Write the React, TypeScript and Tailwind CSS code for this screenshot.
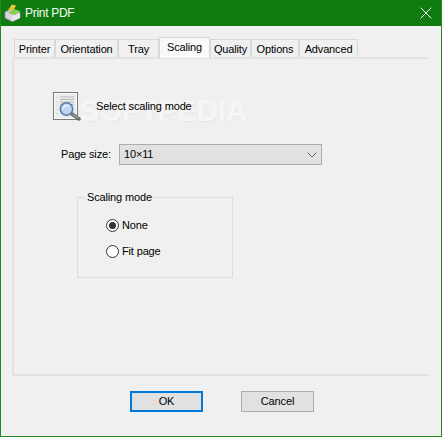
import { ChevronDown, X } from "lucide-react";

const tabs = [
  { label: "Printer", width: "w-[41px]" },
  { label: "Orientation", width: "w-[63px]" },
  { label: "Tray", width: "w-[41px]" },
  { label: "Scaling", width: "w-[51px]", active: true },
  { label: "Quality", width: "w-[41px]" },
  { label: "Options", width: "w-[48px]" },
  { label: "Advanced", width: "w-[59px]" },
];

function AppIcon() {
  return (
    <svg width="17" height="18" viewBox="0 0 17 18" className="shrink-0">
      <path d="M1 8 L8 5 L16 8 L16 14 L8 17.5 L1 14 Z" fill="#d8d4e4" stroke="#8d8aa4" strokeWidth="0.8" />
      <path d="M4 6 L8 0.5 L12 1.5 L9 7 Z" fill="#f2c23c" />
      <path d="M4 9 L10 5 L16 7 L11 11 Z" fill="#7fd04a" />
      <path d="M8 12 L16 10 L16 14 L8 17.5 Z" fill="#ece8f2" />
    </svg>
  );
}

function ScalingIcon() {
  return (
    <svg width="28" height="29" viewBox="0 0 28 29" className="shrink-0">
      <rect x="0.5" y="0.5" width="24" height="27" fill="#f1f1f1" stroke="#77797c" />
      <rect x="1.5" y="1.5" width="22" height="25" fill="#ececec" stroke="#fafafa" />
      <path d="M7 5H21M7 7.5H21M7 10H21M7 12.5H21" stroke="#b5b8bc" strokeWidth="1" />
      <path d="M4 5V23" stroke="#c8c8c8" strokeWidth="1" strokeDasharray="1 3" />
      <path d="M19 22L26 27" stroke="#6b6b6b" strokeWidth="3.4" strokeLinecap="round" />
      <path d="M20 22.5L25 26" stroke="#c4c4c4" strokeWidth="1" strokeLinecap="round" />
      <circle cx="13.5" cy="17" r="6.2" fill="#bcd6f2" stroke="#5f7ea8" strokeWidth="1.6" />
      <path d="M10 17a4 4 0 0 1 6-3" fill="none" stroke="#f4f9ff" strokeWidth="1.2" />
    </svg>
  );
}

function Radio({ label, checked }: { label: string; checked?: boolean }) {
  return (
    <label className="flex items-center gap-[3px] h-[14px]">
      <span className="w-[13px] h-[13px] rounded-full border border-[#333] bg-white flex items-center justify-center">
        {checked && <span className="w-[7px] h-[7px] rounded-full bg-[#333]" />}
      </span>
      <span>{label}</span>
    </label>
  );
}

function Button({ label, focused }: { label: string; focused?: boolean }) {
  return (
    <button
      className={
        focused
          ? "w-[73px] h-[21px] bg-[#e1e1e1] border-2 border-[#0078d7] flex items-center justify-center"
          : "w-[73px] h-[21px] bg-[#e1e1e1] border border-[#adadad] flex items-center justify-center"
      }
    >
      {label}
    </button>
  );
}

export default function App() {
  return (
    <div className="w-[442px] h-[437px] flex flex-col bg-[#f0f0f0] border-x border-b border-[#218a21] font-['Liberation_Sans',sans-serif] text-[11px] tracking-[-0.15px] leading-none text-black overflow-hidden">
      <div className="h-[26px] -mx-px shrink-0 bg-[#107c10] flex items-center pl-[4px] pr-[6px] text-white">
        <AppIcon />
        <span className="ml-[4px] text-[12px] tracking-[-0.3px] text-[#f4fff4]">Print PDF</span>
        <X className="ml-auto w-[20px] h-[20px] text-white" strokeWidth={1.2} />
      </div>

      <div className="flex-1 flex flex-col pt-[11px] pl-[11px] pr-[12px]">
        <div className="flex items-end pl-[2px] h-[20px] relative z-10">
          {tabs.map((tab) =>
            tab.active ? (
              <div
                key={tab.label}
                className={`${tab.width} h-[21px] -mb-[1px] bg-[#f9f9f9] border-x border-t border-[#d9d9d9] flex items-center justify-center pb-[2px]`}
              >
                {tab.label}
              </div>
            ) : (
              <div
                key={tab.label}
                className={`${tab.width} h-[18px] bg-[#f0f0f0] border-t border-r border-l border-[#d9d9d9] flex items-center justify-center pt-px`}
              >
                {tab.label}
              </div>
            ),
          )}
        </div>

        <div className="h-[319px] border-2 border-r-0 border-[#e2e2e2] relative">
          <div className="absolute left-[66px] top-[37px] text-[30px] font-bold tracking-[-0.5px] text-white/60 [text-shadow:1px_1px_1px_rgba(0,0,0,0.04)] pointer-events-none">
            SOFTPEDIA
            <span className="absolute -right-[6px] top-0 text-[8px] font-normal">®</span>
          </div>

          <div className="flex items-center pt-[33px] pl-[39px] gap-[15px] relative">
            <ScalingIcon />
            <span>Select scaling mode</span>
          </div>

          <div className="flex items-center mt-[23px] pl-[47px]">
            <span className="w-[58px]">Page size:</span>
            <div className="w-[203px] h-[21px] bg-[#e1e1e1] border border-[#adadad] flex items-center justify-between pl-[4px] pr-px">
              <span>10×11</span>
              <ChevronDown className="w-[16px] h-[16px] text-[#555]" strokeWidth={1.3} />
            </div>
          </div>

          <fieldset className="mt-[27px] ml-[63px] w-[156px] h-[86px] border border-[#dcdcdc] flex flex-col">
            <legend className="ml-[8px] px-[1px]">Scaling mode</legend>
            <div className="flex flex-col gap-[12px] pl-[28px] pt-[15px]">
              <Radio label="None" checked />
              <Radio label="Fit page" />
            </div>
          </fieldset>
        </div>

        <div className="flex gap-[38px] pt-[15px] pl-[118px]">
          <Button label="OK" focused />
          <Button label="Cancel" />
        </div>
      </div>
    </div>
  );
}
